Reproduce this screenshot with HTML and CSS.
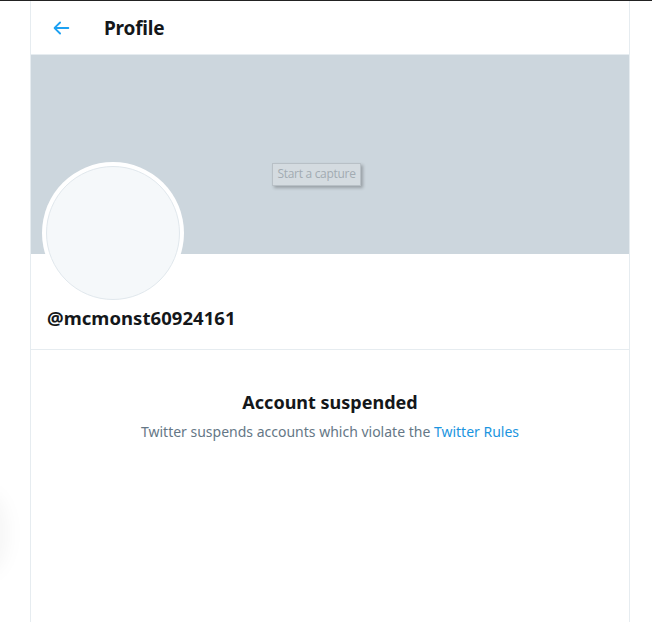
FILE: index.html
```html
<!DOCTYPE html>
<html>
<head>
<meta charset="utf-8">
<link rel="stylesheet" href="styles.css">
</head>
<body>
<div class="topline"></div>
<div class="page">
  <div class="glow"></div>
  <main class="column">
    <header class="header">
      <svg class="back" viewBox="0 0 24 24" width="22" height="22"><path d="M20 11H7.414l4.293-4.293a1 1 0 0 0-1.414-1.414l-6 6a1 1 0 0 0 0 1.414l6 6a1 1 0 0 0 1.414-1.414L7.414 13H20a1 1 0 0 0 0-2z" fill="#1da1f2"/></svg>
      <h1 class="title">Profile</h1>
    </header>
    <section class="profile">
      <div class="banner">
        <div class="capture">Start a capture</div>
      </div>
      <div class="info">
        <div class="avatar"><div class="avatar-inner"></div></div>
        <div class="handle">@mcmonst60924161</div>
      </div>
    </section>
    <section class="notice">
      <h2 class="notice-title">Account suspended</h2>
      <p class="notice-text">Twitter suspends accounts which violate the <a href="#" class="link">Twitter Rules</a></p>
    </section>
  </main>
</div>
</body>
</html>
```
FILE: styles.css
```css
html, body {
  margin: 0;
  padding: 0;
  background: #fff;
  font-family: "Noto Sans", "Open Sans", sans-serif;
}
.topline {
  height: 1px;
  background: #222;
}
.page {
  position: relative;
  height: 621px;
  overflow: hidden;
}
.glow {
  position: absolute;
  left: -28px;
  top: 492px;
  width: 36px;
  height: 80px;
  border-radius: 50%;
  background: rgba(0,0,0,0.035);
  filter: blur(8px);
}
.column {
  margin-left: 30px;
  width: 598px;
  height: 621px;
  border-left: 1px solid #e6ecf0;
  border-right: 1px solid #e6ecf0;
  display: flex;
  flex-direction: column;
}
.header {
  height: 53px;
  border-bottom: 1px solid #e6ecf0;
  display: flex;
  align-items: center;
  padding-left: 19px;
  box-sizing: content-box;
}
.back {
  display: block;
  margin-top: 1px;
}
.title {
  margin: 0 0 0 32px;
  font-size: 19px;
  font-weight: 700;
  color: #14171a;
  letter-spacing: -0.2px;
}
.banner {
  position: relative;
  height: 199px;
  background: #ccd6dd;
}
.capture {
  position: absolute;
  left: 241px;
  top: 108px;
  width: 89px;
  height: 23px;
  box-sizing: border-box;
  border: 1px solid #b8c0c6;
  background: #d4dbe0;
  color: #a2abb2;
  font-size: 12px;
  line-height: 20px;
  text-align: center;
  box-shadow: 2px 2px 3px rgba(0,0,0,0.25);
  font-family: "Open Sans", sans-serif;
  letter-spacing: -0.3px;
}
.info {
  position: relative;
  height: 95px;
  border-bottom: 1px solid #e6ecf0;
  padding-left: 16px;
  display: flex;
  flex-direction: column;
  justify-content: flex-end;
}
.avatar {
  position: absolute;
  left: 11px;
  top: -92px;
  width: 142px;
  height: 142px;
  border-radius: 50%;
  background: #fff;
  display: flex;
  align-items: center;
  justify-content: center;
}
.avatar-inner {
  width: 132px;
  height: 132px;
  border-radius: 50%;
  background: #f5f8fa;
  border: 1px solid #e1e8ed;
}
.handle {
  font-size: 18.5px;
  font-weight: 700;
  color: #14171a;
  margin-bottom: 19px;
  letter-spacing: 0.05px;
}
.notice {
  text-align: center;
  padding-top: 40px;
}
.notice-title {
  margin: 0;
  font-size: 18px;
  font-weight: 700;
  color: #14171a;
  line-height: 24px;
}
.notice-text {
  margin: 8px 0 0;
  font-size: 14px;
  color: #657786;
  line-height: 20px;
}
.link {
  color: #1b95e0;
  text-decoration: none;
}
```
